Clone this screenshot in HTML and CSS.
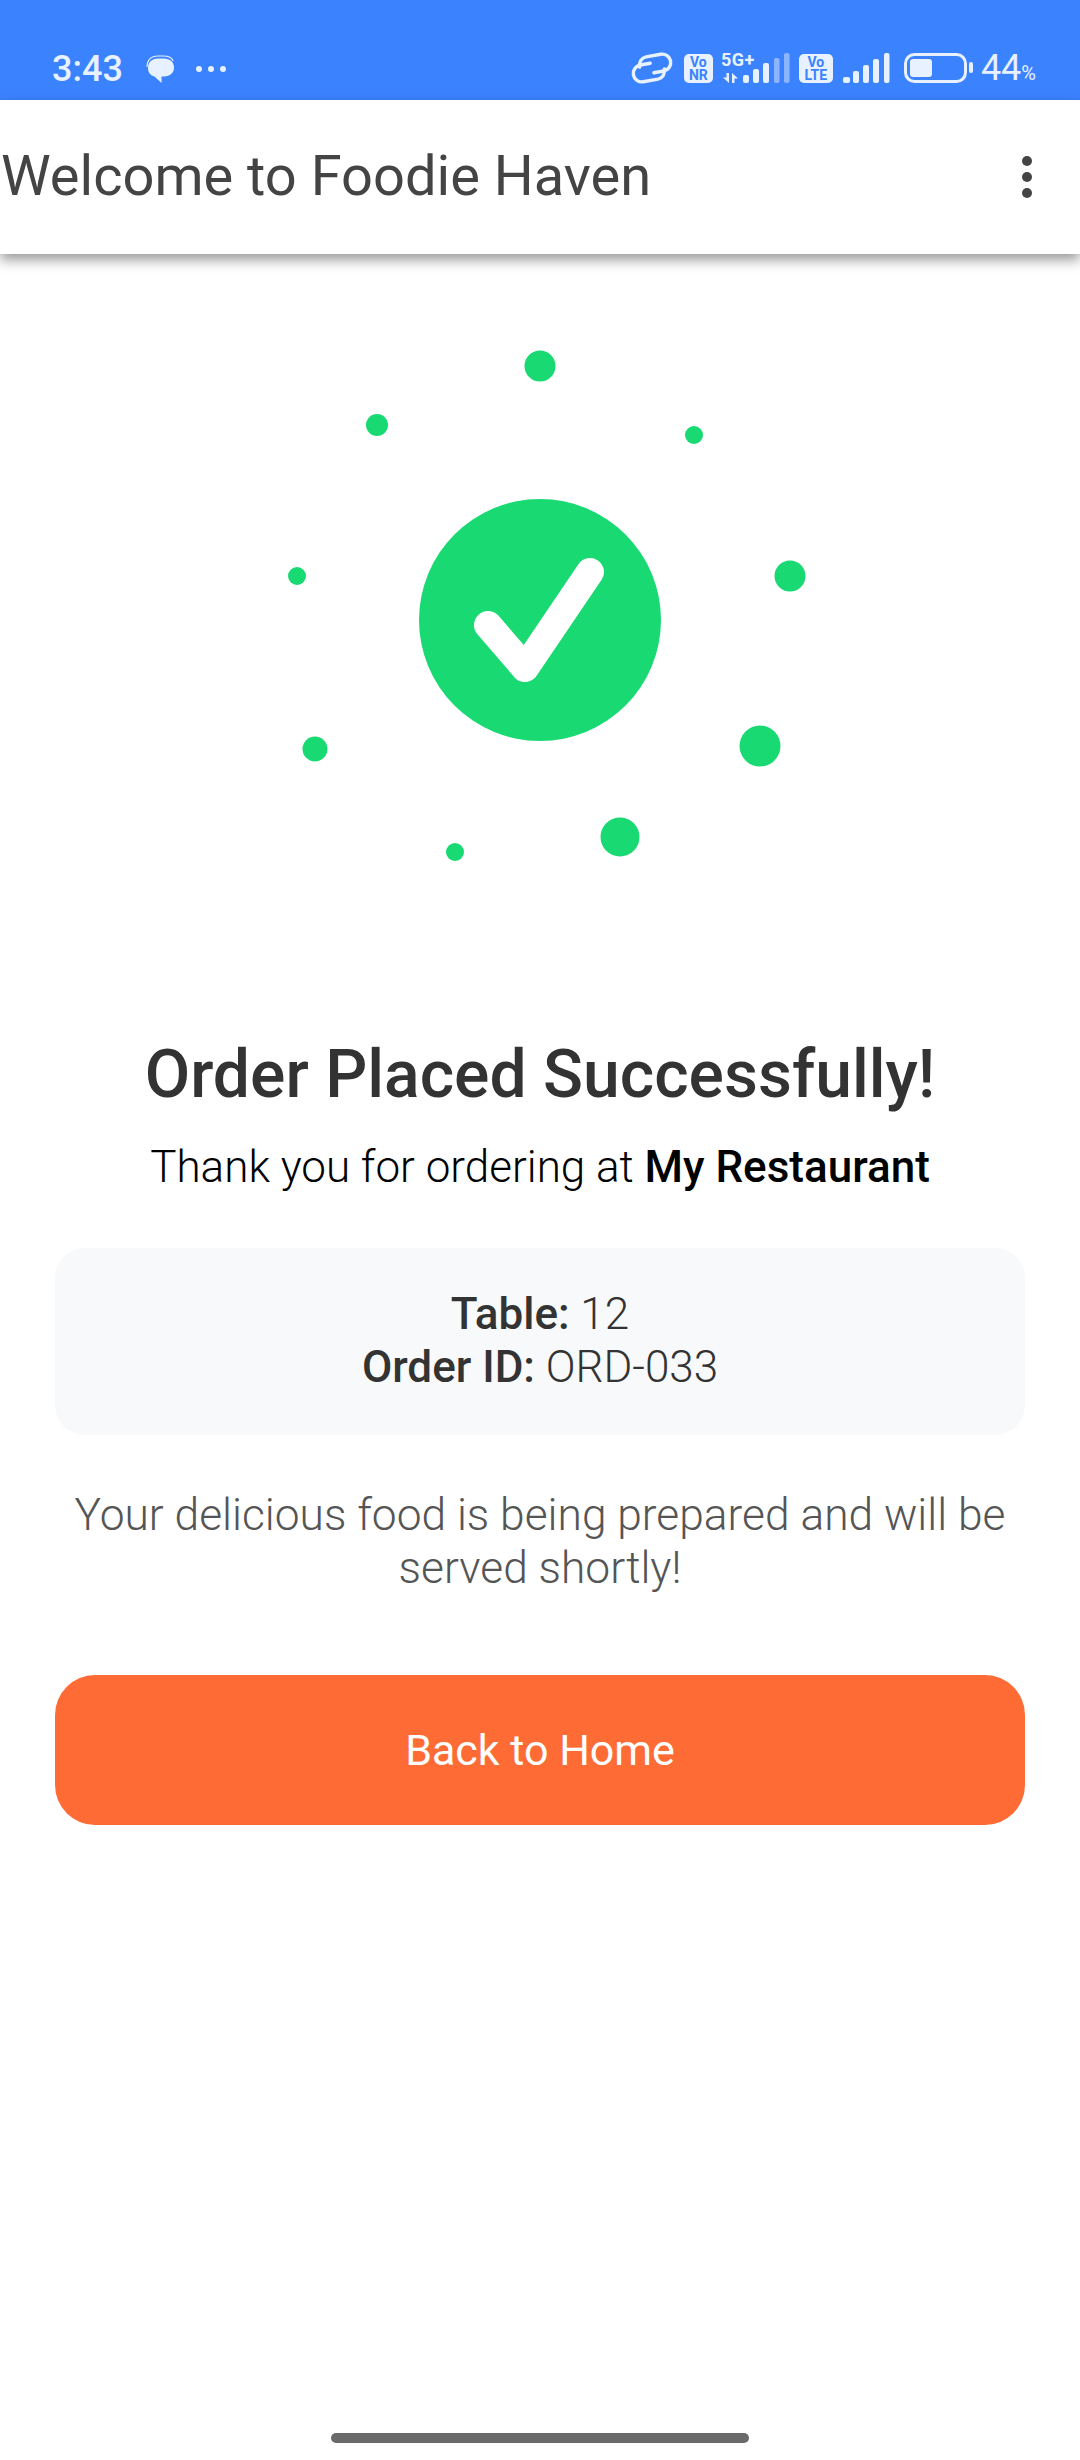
FILE: index.html
```html
<!DOCTYPE html>
<html>
<head>
  <title>Order Placed</title>
  <link rel="stylesheet" href="styles.css">
</head>
<body>
  <div class="status-bar">
    <div class="status-left">
      <span class="clock">3:43</span>
      <svg class="chat-icon" width="28" height="28" viewBox="0 0 28 28">
        <path d="M1 12C1 5 5 1 12 1h5c5 0 9 1 10 5" fill="none" stroke="#e8f1ff" stroke-width="1.200"/>
        <path d="M2 13C2 7 6 3.500 12 3.500h6c6 0 10 3.500 10 9s-4 9-10 9h-2.500V28l-7-6.500C4.500 20.500 2 17.500 2 13z" fill="#e8f1ff"/>
      </svg>
      <span class="dots"><i></i><i></i><i></i></span>
    </div>
    <div class="status-right">
      <svg class="link-icon" width="42" height="31" viewBox="0 0 42 31" fill="none" stroke="#e8f1ff" stroke-width="3.400" stroke-linecap="round">
        <g transform="rotate(-10 21 15)">
          <path d="M9 12A8.500 8.500 0 0 1 17 3H32A8.500 8.500 0 0 1 32 20H22"/>
          <path d="M20 10H10A8.500 8.500 0 0 0 10 27H25A8.500 8.500 0 0 0 33 18"/>
        </g>
      </svg>
      <span class="badge badge-nr">Vo<br>NR</span>
      <svg class="signal-5g" width="70" height="31" viewBox="0 0 70 31">
        <text x="0" y="13" class="tiny-label">5G+</text>
        <path d="M5.500 20H8v10l-6-5.500h3.500z" fill="#e8f1ff"/>
        <path d="M11 30V20l6 5.500h-3.500V30z" fill="#e8f1ff"/>
        <rect x="22" y="22" width="6" height="8" rx="2" fill="#e8f1ff"/>
        <rect x="32" y="16" width="6" height="14" rx="2" fill="#e8f1ff"/>
        <rect x="42" y="10" width="6" height="20" rx="2" fill="#e8f1ff"/>
        <rect x="53" y="5" width="5.500" height="25" rx="2" fill="#8db4ff"/>
        <rect x="63" y="0" width="5.500" height="30" rx="2" fill="#8db4ff"/>
      </svg>
      <span class="badge badge-lte">Vo<br>LTE</span>
      <svg class="signal" width="47" height="31" viewBox="0 0 47 31" fill="#e8f1ff">
        <rect x="0" y="24" width="7" height="6" rx="2"/>
        <rect x="10" y="18" width="6" height="12" rx="2"/>
        <rect x="20" y="12" width="6" height="18" rx="2"/>
        <rect x="30" y="6" width="6" height="24" rx="2"/>
        <rect x="41" y="0" width="5.500" height="30" rx="2"/>
      </svg>
      <svg class="battery" width="70" height="31" viewBox="0 0 70 31">
        <rect x="1.500" y="1.500" width="60" height="27" rx="9" fill="none" stroke="#e8f1ff" stroke-width="3"/>
        <rect x="6" y="6" width="22" height="18" rx="3" fill="#e8f1ff"/>
        <rect x="65" y="9" width="4" height="11" rx="2" fill="#e8f1ff"/>
      </svg>
      <span class="battery-text">44<small>%</small></span>
    </div>
  </div>

  <div class="app-bar">
    <h1 class="app-title">Welcome to Foodie Haven</h1>
    <span class="menu-dots"><i></i><i></i><i></i></span>
  </div>

  <div class="content">
    <svg class="success-art" width="640" height="560" viewBox="0 0 640 560" fill="#18d972">
      <circle cx="320" cy="86" r="15.500"/>
      <circle cx="157" cy="145" r="11"/>
      <circle cx="474" cy="155" r="9"/>
      <circle cx="77" cy="296" r="9"/>
      <circle cx="570" cy="296" r="15.500"/>
      <circle cx="95" cy="469" r="12.500"/>
      <circle cx="540" cy="466" r="20.500"/>
      <circle cx="400" cy="557" r="19.500"/>
      <circle cx="235" cy="572" r="9"/>
      <circle cx="320" cy="340" r="121"/>
      <path d="M268 345l37 43 65-96" fill="none" stroke="#fff" stroke-width="28" stroke-linecap="round" stroke-linejoin="round"/>
    </svg>

    <h2 class="headline">Order Placed Successfully!</h2>
    <p class="thanks">Thank you for ordering at <strong>My Restaurant</strong></p>

    <div class="order-card">
      <div><strong>Table:</strong> 12</div>
      <div><strong>Order ID:</strong> ORD-033</div>
    </div>

    <p class="note">Your delicious food is being prepared and will be served shortly!</p>

    <button class="home-btn">Back to Home</button>
  </div>

  <div class="home-bar"></div>
</body>
</html>
```

FILE: styles.css
```css
* {
  box-sizing: border-box;
}
html, body {
  margin: 0;
  height: 2460px;
  overflow: hidden;
}
body {
  font-family: Roboto, "Liberation Sans", sans-serif;
  background: #fff;
  display: flex;
  flex-direction: column;
}
.status-bar {
  height: 100px;
  flex: none;
  background: #3b82ff;
  color: #e8f1ff;
  display: flex;
  justify-content: space-between;
  align-items: center;
  padding: 53px 44px 16px 52px;
}
.status-left, .status-right {
  display: flex;
  align-items: center;
}
.status-bar svg {
  overflow: visible;
}
.clock {
  font-size: 36px;
  font-weight: 500;
  line-height: 36px;
}
.chat-icon {
  margin-left: 23px;
}
.dots {
  display: flex;
  gap: 6px;
  margin-left: 22px;
}
.dots i {
  width: 6px;
  height: 6px;
  border-radius: 50%;
  background: #e8f1ff;
}
.badge {
  background: #e8f1ff;
  color: #3b82ff;
  font-size: 14px;
  font-weight: 700;
  line-height: 13px;
  text-align: center;
  border-radius: 5px;
  height: 29px;
  padding-top: 2px;
}
.badge-nr {
  width: 29px;
  margin-left: 11px;
}
.badge-lte {
  width: 34px;
  margin-left: 8px;
}
.signal-5g {
  margin-left: 8px;
}
.signal {
  margin-left: 10px;
}
.battery {
  margin-left: 14px;
}
.tiny-label {
  font-size: 18px;
  font-weight: 700;
  letter-spacing: 0.5px;
  fill: #e8f1ff;
}
.battery-text {
  font-size: 36px;
  font-weight: 400;
  line-height: 36px;
  margin-left: 7px;
  padding-top: 4px;
}
.battery-text small {
  font-size: 20px;
}
.app-bar {
  height: 154px;
  flex: none;
  background: #fff;
  box-shadow: 0 6px 12px rgba(0, 0, 0, 0.4);
  display: flex;
  align-items: center;
  justify-content: space-between;
  padding: 0 48px 2px 1px;
  position: relative;
}
.app-title {
  margin: 0;
  font-size: 56px;
  font-weight: 400;
  color: #444;
}
.menu-dots {
  display: flex;
  flex-direction: column;
  gap: 6px;
  margin-top: 2px;
}
.menu-dots i {
  width: 10px;
  height: 10px;
  border-radius: 50%;
  background: #444;
}
.content {
  display: flex;
  flex-direction: column;
  align-items: center;
  padding: 26px 55px 0;
}
.success-art {
  display: block;
  margin-bottom: 197px;
  overflow: visible;
}
.headline {
  margin: 0;
  font-size: 66px;
  font-weight: 500;
  color: #333;
  line-height: 76px;
}
.thanks {
  margin: 27px 0 0;
  font-size: 44px;
  font-weight: 300;
  color: #000;
  line-height: 54px;
}
.thanks strong, .order-card strong {
  font-weight: 500;
}
.order-card {
  width: 100%;
  height: 187px;
  margin-top: 54px;
  background: #f8f9fa;
  border-radius: 30px;
  font-size: 44px;
  font-weight: 300;
  color: #333;
  line-height: 53px;
  text-align: center;
  padding-top: 40px;
}
.note {
  margin: 54px 0 0;
  font-size: 44.3px;
  font-weight: 300;
  color: #555;
  line-height: 53px;
  text-align: center;
}
.home-btn {
  width: 100%;
  height: 150px;
  margin-top: 80px;
  border: none;
  border-radius: 40px;
  background: #ff6b35;
  color: #fff;
  font-family: inherit;
  font-size: 43px;
  font-weight: 400;
}
.home-bar {
  width: 418px;
  height: 10px;
  border-radius: 5px;
  background: #6a6a6a;
  margin: auto auto 17px;
}
```
